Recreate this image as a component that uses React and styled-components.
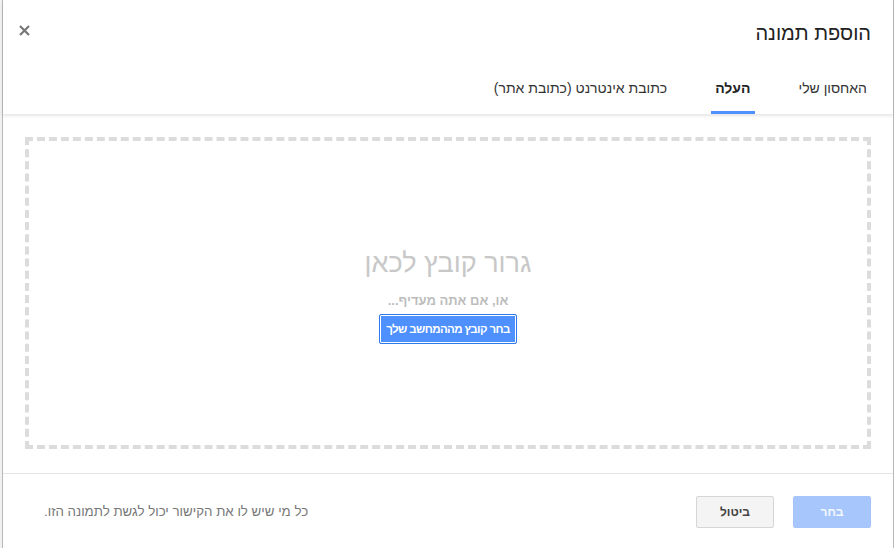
import React from 'react';
import styled, { createGlobalStyle } from 'styled-components';

const Global = createGlobalStyle`
  html, body {
    margin: 0;
    padding: 0;
    background: #fff;
    font-family: 'Liberation Sans', Arial, sans-serif;
  }
`;

const Page = styled.div`
  width: 894px;
  height: 548px;
  overflow: hidden;
  background: #f1f1f1;
`;

const Dialog = styled.div`
  direction: rtl;
  margin-left: 2px;
  width: 890px;
  height: 548px;
  background: #fff;
  border-left: 1px solid #b9b9b9;
  border-right: 1px solid #b9b9b9;
  display: flex;
  flex-direction: column;
`;

const Header = styled.div`
  height: 114px;
  box-sizing: border-box;
  padding: 21px 22px 0 22px;
  display: flex;
  flex-direction: column;
  box-shadow: 0 2px 3px rgba(0, 0, 0, 0.1);
  position: relative;
  z-index: 1;
`;

const TitleRow = styled.div`
  display: flex;
  justify-content: space-between;
  align-items: center;
  height: 24px;
`;

const Title = styled.h1`
  margin: 0;
  font-size: 20px;
  font-weight: normal;
  color: #222;
  line-height: 24px;
`;

const Close = styled.button`
  border: 0;
  background: none;
  padding: 0;
  margin-left: -7px;
  margin-top: -5px;
  width: 12px;
  height: 12px;
  display: flex;
  cursor: pointer;
`;

const Tabs = styled.div`
  display: flex;
  margin-top: 31px;
  gap: 40px;
`;

const Tab = styled.div`
  padding: 0 4px 0 4px;
  height: 38px;
  box-sizing: border-box;
  padding-top: 3px;
  font-size: 14px;
  line-height: 18px;
  color: ${p => (p.active ? '#222' : '#333')};
  font-weight: ${p => (p.active ? 'bold' : 'normal')};
  border-bottom: 3px solid ${p => (p.active ? '#4d90fe' : 'transparent')};
`;

const Body = styled.div`
  flex: 1;
  padding: 23px 22px 24px 22px;
  display: flex;
`;

const DropZone = styled.div`
  flex: 1;
  border: 4px dashed #dcdcdc;
  display: flex;
  flex-direction: column;
  align-items: center;
  justify-content: center;
  padding-top: 4px;
`;

const DropTitle = styled.div`
  font-size: 27px;
  color: #c8c8c8;
  line-height: 34px;
`;

const OrText = styled.div`
  margin-top: 13px;
  font-size: 13px;
  font-weight: bold;
  color: #bdbdbd;
  line-height: 16px;
`;

const PickButton = styled.button`
  margin-top: 5px;
  height: 30px;
  padding: 0 6px;
  background: #4d90fe;
  border: 1px solid #3079ed;
  box-shadow: inset 0 0 0 1px #fff;
  color: #fff;
  font-family: inherit;
  font-size: 11.5px;
  letter-spacing: -0.6px;
  font-weight: bold;
  border-radius: 2px;
  direction: rtl;
`;

const Footer = styled.div`
  height: 75px;
  box-sizing: border-box;
  border-top: 1px solid #e5e5e5;
  padding: 22px 22px 0 41px;
  display: flex;
  align-items: flex-start;
  gap: 19px;
`;

const Button = styled.button`
  width: 78px;
  height: 32px;
  border-radius: 2px;
  font-family: inherit;
  font-size: 12px;
  font-weight: bold;
  border: 1px solid ${p => (p.primary ? '#a6c6fb' : '#d6d6d6')};
  background: ${p => (p.primary ? '#a7c7fc' : '#f4f4f4')};
  color: ${p => (p.primary ? '#f3f7ff' : '#444')};
`;

const Note = styled.div`
  margin-right: auto;
  margin-top: 8px;
  font-size: 13.3px;
  color: #777;
  line-height: 16px;
`;

export default function App() {
  return (
    <Page>
      <Global />
      <Dialog>
        <Header>
          <TitleRow>
            <Title>הוספת תמונה</Title>
            <Close aria-label="סגור">
              <svg width="11" height="11" viewBox="0 0 11 11">
                <path d="M1 1L10 10M10 1L1 10" stroke="#777" strokeWidth="2.2" />
              </svg>
            </Close>
          </TitleRow>
          <Tabs>
            <Tab>האחסון שלי</Tab>
            <Tab active>העלה</Tab>
            <Tab>כתובת אינטרנט (כתובת אתר)</Tab>
          </Tabs>
        </Header>
        <Body>
          <DropZone>
            <DropTitle>גרור קובץ לכאן</DropTitle>
            <OrText>או, אם אתה מעדיף...</OrText>
            <PickButton>בחר קובץ מההמחשב שלך</PickButton>
          </DropZone>
        </Body>
        <Footer>
          <Button primary>בחר</Button>
          <Button>ביטול</Button>
          <Note>כל מי שיש לו את הקישור יכול לגשת לתמונה הזו.</Note>
        </Footer>
      </Dialog>
    </Page>
  );
}
